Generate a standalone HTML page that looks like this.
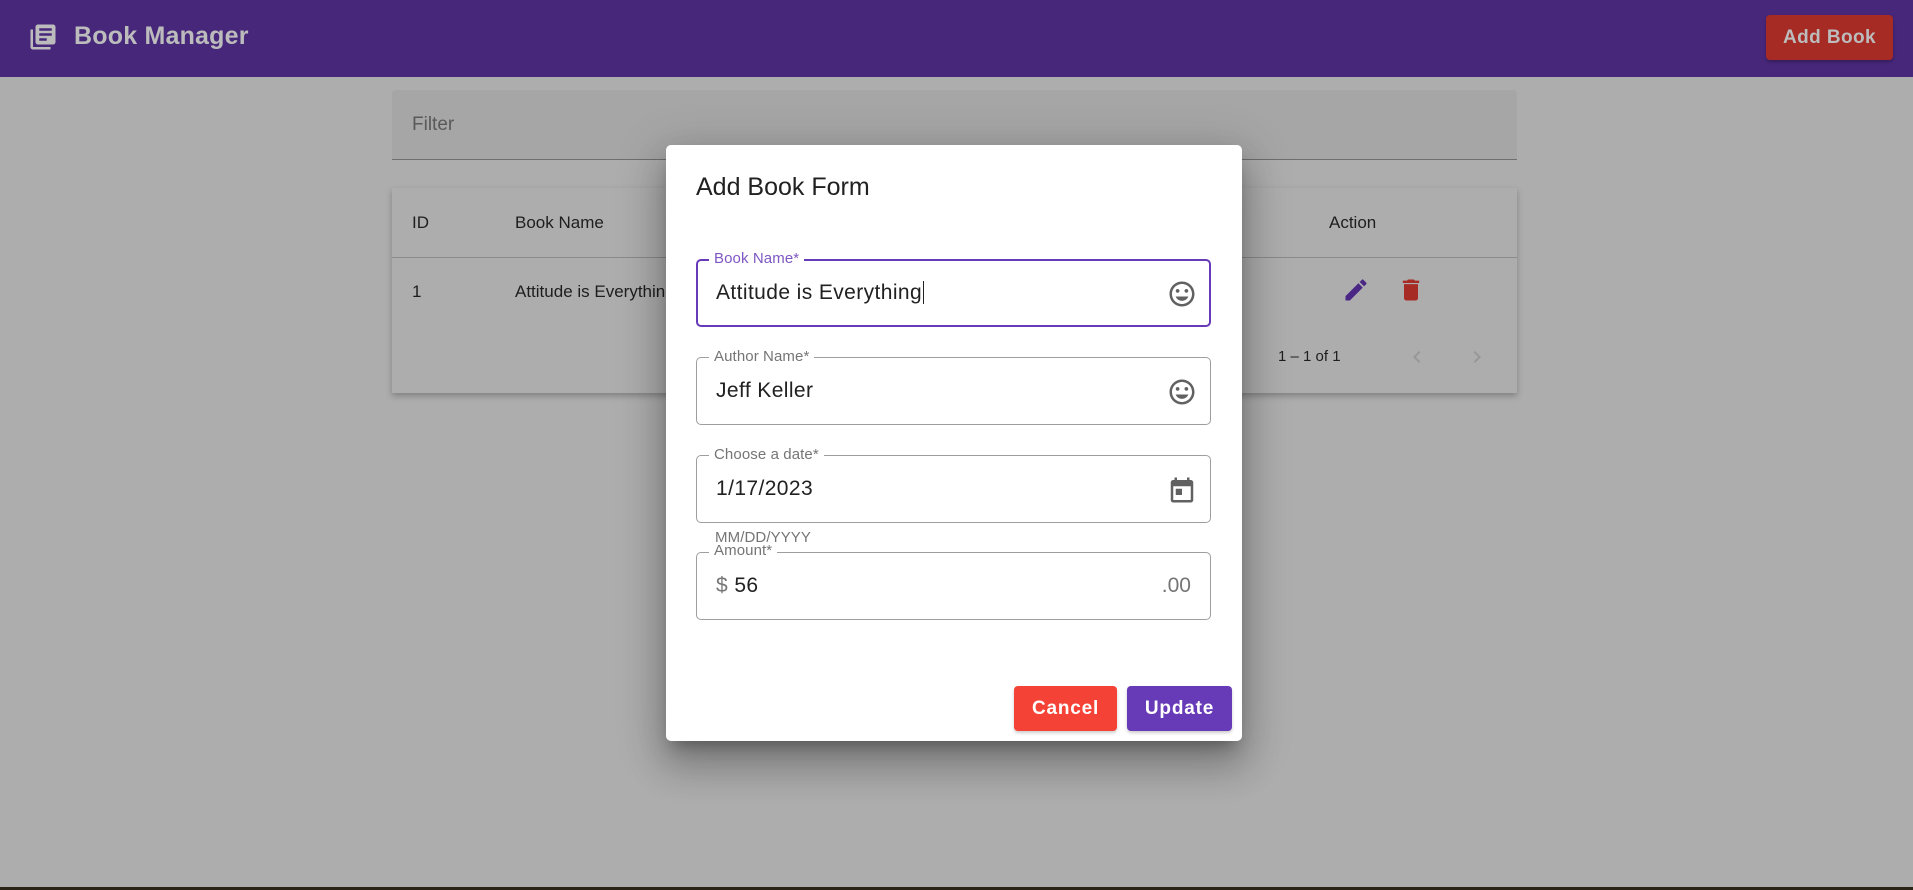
<!DOCTYPE html>
<html><head><meta charset="utf-8">
<style>
*{box-sizing:border-box;margin:0;padding:0}
body{width:1913px;height:890px;overflow:hidden;background:#adadad;font-family:"Liberation Sans",sans-serif;position:relative}
.abs{position:absolute}
.hdr{left:0;top:0;width:1913px;height:77px;background:#47277a}
.title{left:74px;top:22px;font-size:25px;color:#bcbcbc;font-weight:bold;letter-spacing:.2px}
.addbtn{left:1766px;top:15px;width:127px;height:45px;background:#a62b25;border-radius:4px;color:#bcbcbc;font-size:19px;font-weight:bold;text-align:center;line-height:45px;letter-spacing:.4px;box-shadow:0 2px 3px rgba(0,0,0,.25)}
.filter{left:392px;top:90px;width:1125px;height:70px;background:#a6a6a6;border-bottom:1px solid #6e6e6e;border-radius:4px 4px 0 0}
.filter span{position:absolute;left:20px;top:24px;font-size:19px;color:#595959}
.card{left:392px;top:188px;width:1125px;height:205px;background:#adadad;box-shadow:0 3px 6px rgba(0,0,0,.25)}
.t{position:absolute;font-size:17px;color:#1e1e1e}
.line{position:absolute;left:0;width:1125px;top:69px;height:1px;background:#8a8a8a}
.dlg{left:666px;top:145px;width:576px;height:596px;background:#fff;border-radius:5px;box-shadow:0 11px 15px -7px rgba(0,0,0,.3),0 24px 38px 3px rgba(0,0,0,.2),0 9px 46px 8px rgba(0,0,0,.15)}
.dt{position:absolute;left:30px;top:28px;font-size:25px;color:#212121}
.f{position:absolute;left:30px;width:515px;height:68px;border:1px solid #9e9e9e;border-radius:5px}
.f.focus{border:2px solid #673ab7}
.lab{position:absolute;left:12px;top:-10px;background:#fff;padding:0 5px;font-size:15px;color:#757575;letter-spacing:.1px;line-height:17px}
.focus .lab{color:#7e57c2;left:11px;top:-11px}
.val{position:absolute;left:19px;top:21px;font-size:21px;color:#212121;letter-spacing:.4px}
.focus .val{left:18px;top:20px}
.ic{position:absolute;right:13px;top:19px}
.focus .ic{right:12px;top:18px}
.btn{position:absolute;top:541px;height:45px;border-radius:4px;color:#fff;font-size:19px;font-weight:bold;text-align:center;line-height:45px;letter-spacing:.8px;box-shadow:0 2px 3px rgba(0,0,0,.2)}
</style></head><body>
<div class="abs hdr"></div>
<svg class="abs" style="left:28px;top:22px" width="30" height="30" viewBox="0 0 24 24"><path fill="#bcbcbc" d="M4 6H2v14c0 1.1.9 2 2 2h14v-2H4V6zm16-4H8c-1.1 0-2 .9-2 2v12c0 1.1.9 2 2 2h12c1.1 0 2-.9 2-2V4c0-1.1-.9-2-2-2zm-1 9H9V9h10v2zm-4 4H9v-2h6v2zm4-8H9V5h10v2z"/></svg>
<div class="abs title">Book Manager</div>
<div class="abs addbtn">Add Book</div>
<div class="abs filter"><span>Filter</span></div>
<div class="abs card">
<div class="t" style="left:20px;top:25px">ID</div>
<div class="t" style="left:123px;top:25px">Book Name</div>
<div class="t" style="left:937px;top:25px">Action</div>
<div class="line"></div>
<div class="t" style="left:20px;top:94px">1</div>
<div class="t" style="left:123px;top:94px">Attitude is Everything</div>
<svg style="position:absolute;left:950px;top:88px" width="28" height="28" viewBox="0 0 24 24"><path fill="#4a2785" d="M3 17.25V21h3.75L17.81 9.94l-3.75-3.75L3 17.25zM20.71 7.04a1 1 0 0 0 0-1.41l-2.34-2.34a1 1 0 0 0-1.41 0l-1.83 1.83 3.75 3.75 1.83-1.83z"/></svg>
<svg style="position:absolute;left:1005px;top:88px" width="28" height="28" viewBox="0 0 24 24"><path fill="#a62b25" d="M6 19c0 1.1.9 2 2 2h8c1.1 0 2-.9 2-2V7H6v12zM19 4h-3.5l-1-1h-5l-1 1H5v2h14V4z"/></svg>
<div class="t" style="left:886px;top:160px;font-size:15px">1 – 1 of 1</div>
<svg style="position:absolute;left:1013px;top:157px" width="24" height="24" viewBox="0 0 24 24"><path fill="#979797" d="M15.41 7.41L14 6l-6 6 6 6 1.41-1.41L10.83 12z"/></svg>
<svg style="position:absolute;left:1073px;top:157px" width="24" height="24" viewBox="0 0 24 24"><path fill="#979797" d="M8.59 16.59L10 18l6-6-6-6-1.41 1.41L13.17 12z"/></svg>
</div>
<div class="abs" style="left:0;top:887px;width:1913px;height:3px;background:#2a2418"></div>
<div class="abs dlg">
<div class="dt">Add Book Form</div>
<div class="f focus" style="top:114px"><div class="lab">Book Name*</div><div class="val">Attitude is Everything<span style="border-left:1px solid #222;margin-left:1px"></span></div>
<svg class="ic" width="30" height="30" viewBox="0 0 24 24"><path fill="#616161" d="M11.99 2C6.47 2 2 6.48 2 12s4.47 10 9.99 10C17.52 22 22 17.52 22 12S17.52 2 11.99 2zM12 20c-4.42 0-8-3.58-8-8s3.58-8 8-8 8 3.58 8 8-3.58 8-8 8zm3.5-9c.83 0 1.5-.67 1.5-1.5S16.33 8 15.5 8 14 8.67 14 9.5s.67 1.5 1.5 1.5zm-7 0c.83 0 1.5-.67 1.5-1.5S9.33 8 8.5 8 7 8.67 7 9.5 7.67 11 8.5 11zm3.5 6.5c2.33 0 4.310-1.46 5.11-3.5H6.89c.8 2.04 2.78 3.5 5.11 3.5z"/></svg></div>
<div class="f" style="top:212px"><div class="lab">Author Name*</div><div class="val">Jeff Keller</div>
<svg class="ic" width="30" height="30" viewBox="0 0 24 24"><path fill="#616161" d="M11.99 2C6.47 2 2 6.48 2 12s4.47 10 9.99 10C17.52 22 22 17.52 22 12S17.52 2 11.99 2zM12 20c-4.42 0-8-3.58-8-8s3.58-8 8-8 8 3.58 8 8-3.58 8-8 8zm3.5-9c.83 0 1.5-.67 1.5-1.5S16.33 8 15.5 8 14 8.67 14 9.5s.67 1.5 1.5 1.5zm-7 0c.83 0 1.5-.67 1.5-1.5S9.33 8 8.5 8 7 8.67 7 9.5 7.67 11 8.5 11zm3.5 6.5c2.33 0 4.31-1.46 5.11-3.5H6.89c.8 2.04 2.78 3.5 5.11 3.5z"/></svg></div>
<div class="f" style="top:310px"><div class="lab">Choose a date*</div><div class="val">1/17/2023</div>
<svg class="ic" width="30" height="30" viewBox="0 0 24 24"><path fill="#616161" d="M19 4h-1V2h-2v2H8V2H6v2H5c-1.11 0-2 .9-2 2v14c0 1.1.89 2 2 2h14c1.1 0 2-.9 2-2V6c0-1.1-.9-2-2-2zm0 16H5V9h14v11zM7 11h5v5H7z"/></svg></div>
<div style="position:absolute;left:49px;top:385px;font-size:15px;color:#757575;letter-spacing:.1px;line-height:16px;z-index:2">MM/DD/YYYY</div>
<div class="f" style="top:407px"><div class="lab" style="top:-11px;background:transparent;z-index:3">Amount*</div>
<div style="position:absolute;left:12px;top:-2px;width:68px;height:4px;background:#fff"></div>
<div class="val"><span style="color:#757575">$</span> 56</div>
<div style="position:absolute;right:19px;top:21px;font-size:21px;color:#757575">.00</div></div>
<div class="btn" style="left:348px;width:103px;background:#f44336">Cancel</div>
<div class="btn" style="left:461px;width:105px;background:#673ab7">Update</div>
</div>
</body></html>
